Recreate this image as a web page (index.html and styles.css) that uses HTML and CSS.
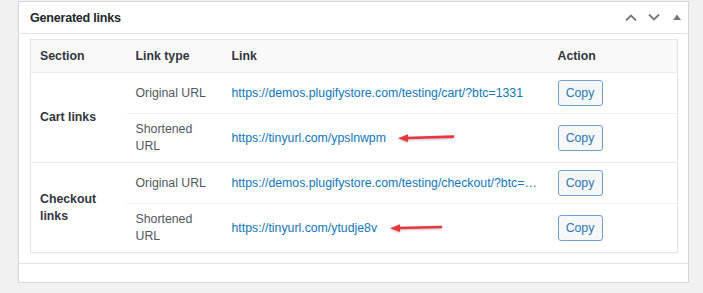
FILE: index.html
```html
<!DOCTYPE html>
<html lang="en">
<head>
    <meta charset="UTF-8">
    <title>Generated links</title>
    <link rel="stylesheet" href="styles.css">
</head>
<body>
    <div class="postbox">
        <div class="postbox-header">
            <h2>Generated links</h2>
            <div class="handles">
                <svg class="handle" width="12" height="7" viewBox="0 0 12 7"><path d="M1 6.5 L6 1.5 L11 6.5" fill="none" stroke="#72777c" stroke-width="1.8"/></svg>
                <svg class="handle" width="12" height="7" viewBox="0 0 12 7"><path d="M1 0.5 L6 5.5 L11 0.5" fill="none" stroke="#72777c" stroke-width="1.8"/></svg>
                <svg class="handle toggle" width="8" height="6" viewBox="0 0 8 6"><path d="M0 6 L4 0.5 L8 6 Z" fill="#72777c"/></svg>
            </div>
        </div>

        <div class="inside">
            <table class="links-table">
                <colgroup>
                    <col class="col-section">
                    <col class="col-type">
                    <col class="col-link">
                    <col class="col-action">
                </colgroup>
                <thead>
                    <tr>
                        <th>Section</th>
                        <th>Link type</th>
                        <th>Link</th>
                        <th>Action</th>
                    </tr>
                </thead>
                <tbody>
                    <tr class="group-start">
                        <td class="section" rowspan="2">Cart links</td>
                        <td class="type">Original URL</td>
                        <td><a href="#">https://demos.plugifystore.com/testing/cart/?btc=1331</a></td>
                        <td><button class="button">Copy</button></td>
                    </tr>
                    <tr>
                        <td class="type">Shortened URL</td>
                        <td>
                            <a href="#">https://tinyurl.com/ypslnwpm</a>
                            <svg class="arrow" width="58" height="10" viewBox="0 0 58 10"><path d="M10 5 L56 3.6" stroke="#e8383d" stroke-width="2.6" stroke-linecap="round"/><path d="M1 5.3 L11 1.2 L11 9 Z" fill="#e8383d"/></svg>
                        </td>
                        <td><button class="button">Copy</button></td>
                    </tr>
                    <tr class="group-start">
                        <td class="section" rowspan="2">Checkout links</td>
                        <td class="type">Original URL</td>
                        <td><a href="#">https://demos.plugifystore.com/testing/checkout/?btc=…</a></td>
                        <td><button class="button">Copy</button></td>
                    </tr>
                    <tr>
                        <td class="type">Shortened URL</td>
                        <td>
                            <a href="#">https://tinyurl.com/ytudje8v</a>
                            <svg class="arrow" width="54" height="10" viewBox="0 0 54 10"><path d="M10 5 L52 4" stroke="#e8383d" stroke-width="2.6" stroke-linecap="round"/><path d="M1 5.3 L11 1.2 L11 9 Z" fill="#e8383d"/></svg>
                        </td>
                        <td><button class="button">Copy</button></td>
                    </tr>
                </tbody>
            </table>
        </div>
        <div class="postbox-footer"></div>
    </div>
</body>
</html>
```

FILE: styles.css
```css
body {
    margin: 0;
    padding: 1px 0 0 18px;
    background: #f1f1f1;
    font-family: "Liberation Sans", Arial, sans-serif;
    font-size: 12.3px;
    color: #444;
}
.postbox {
    width: 669px;
    background: #fff;
    border: 1px solid #d5d8db;
    box-shadow: 0 1px 1px rgba(0, 0, 0, 0.04);
}
.postbox-header {
    display: flex;
    align-items: center;
    justify-content: space-between;
    height: 31px;
    padding: 0 7px 0 11px;
    border-bottom: 1px solid #e2e4e7;
}
.postbox-header h2 {
    margin: 0;
    font-size: 12.6px;
    font-weight: bold;
    letter-spacing: -0.25px;
    color: #23282d;
}
.handles {
    display: flex;
    align-items: center;
    gap: 11px;
}
.handle.toggle {
    margin-left: 2px;
    margin-top: -2px;
}
.inside {
    padding: 5px 10px 10px 11px;
    border-bottom: 1px solid #e2e4e7;
}
.postbox-footer {
    height: 18px;
}
.links-table {
    width: 100%;
    table-layout: fixed;
    border-collapse: collapse;
    border: 1px solid #e5e5e5;
    box-shadow: 0 1px 2px rgba(0, 0, 0, 0.05);
}
.col-section { width: 96px; }
.col-type { width: 96px; }
.col-action { width: 129px; }
.links-table th {
    text-align: left;
    font-weight: bold;
    color: #32373c;
    background: #f9f9f9;
    padding: 0 9px;
    height: 32px;
    border-bottom: 1px solid #ececec;
}
.links-table td {
    padding: 7px 9px;
    line-height: 17px;
    vertical-align: middle;
    border-top: 1px solid #f0f0f0;
}
.links-table td.section {
    font-weight: bold;
    color: #32373c;
}
.links-table tr.group-start td {
    border-top-color: #ececec;
}
.links-table td.type {
    color: #50575e;
}
.links-table a {
    color: #0f78b9;
    text-decoration: none;
}
.arrow {
    margin-left: 8px;
    vertical-align: middle;
    filter: drop-shadow(0 1px 1px rgba(0, 0, 0, 0.25));
}
.button {
    width: 45px;
    height: 26px;
    padding: 0;
    font-family: inherit;
    font-size: 12.3px;
    color: #2a77b5;
    background: #f5f7f8;
    border: 1px solid #6fa3cf;
    border-radius: 3px;
}
```
